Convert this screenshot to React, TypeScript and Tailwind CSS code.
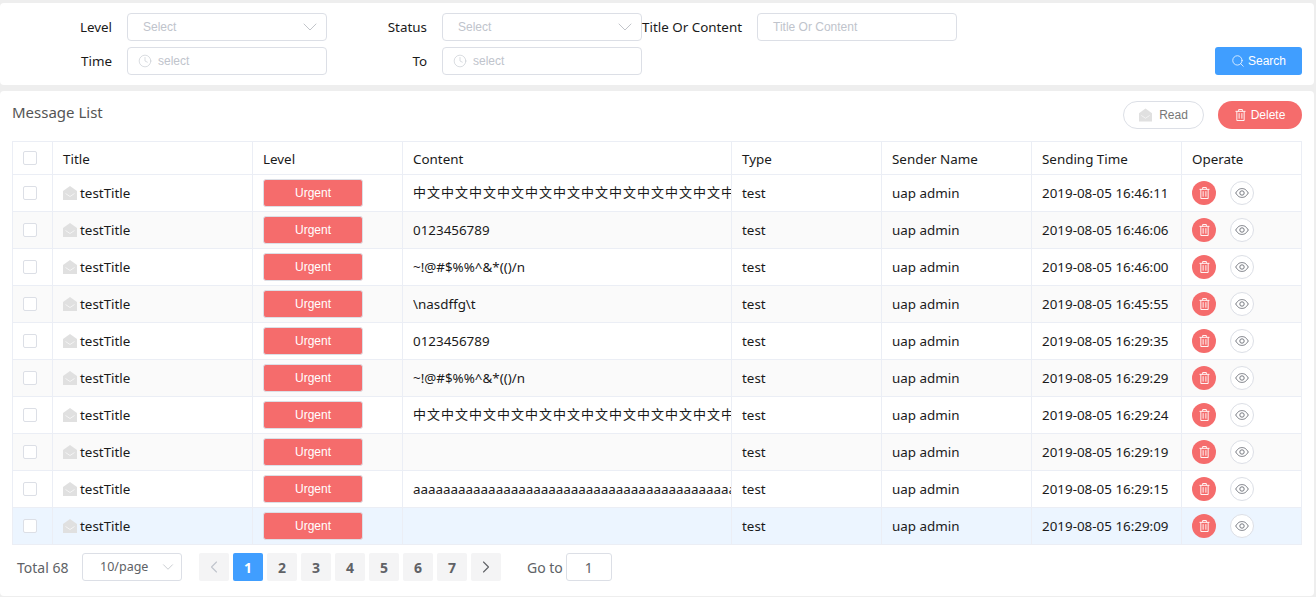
import React from 'react';
import { ChevronDown, ChevronLeft, ChevronRight, Clock, Search } from 'lucide-react';

const sans = 'font-["Noto_Sans","Noto_Sans_CJK_SC",sans-serif]';
const arial = 'font-["Liberation_Sans",Arial,sans-serif]';

const rows = [
    { content: '中文中文中文中文中文中文中文中文中文中文中文中文中文中文', time: '2019-08-05 16:46:11' },
    { content: '0123456789', time: '2019-08-05 16:46:06' },
    { content: '~!@#$%%^&*(()/n', time: '2019-08-05 16:46:00' },
    { content: '\\nasdffg\\t', time: '2019-08-05 16:45:55' },
    { content: '0123456789', time: '2019-08-05 16:29:35' },
    { content: '~!@#$%%^&*(()/n', time: '2019-08-05 16:29:29' },
    { content: '中文中文中文中文中文中文中文中文中文中文中文中文中文中文', time: '2019-08-05 16:29:24' },
    { content: '', time: '2019-08-05 16:29:19' },
    { content: 'aaaaaaaaaaaaaaaaaaaaaaaaaaaaaaaaaaaaaaaaaaaaaaaaaaaaaaaaaaaa', time: '2019-08-05 16:29:15' },
    { content: '', time: '2019-08-05 16:29:09' },
];

const MailOpen = ({ className }: { className?: string }) => (
    <svg viewBox="0 0 14 14" className={className} fill="none">
        <path d="M0 5 L7 0 L14 5 V14 H0 Z" fill="#e0e0e0" />
        <path d="M2.5 7.5 L7 10.5 L11.5 7.5" stroke="#f4f4f4" strokeWidth="1" />
    </svg>
);

const TrashIcon = ({ className }: { className?: string }) => (
    <svg viewBox="0 0 12 13" className={className} fill="none" stroke="currentColor" strokeWidth="1">
        <path d="M0.5 2.5 H11.5 M4 2.5 V0.5 H8 V2.5 M2 2.5 V12.5 H10 V2.5 M4.5 4.5 V10.5 M7.5 4.5 V10.5" />
    </svg>
);

const EyeIcon = () => (
    <svg viewBox="0 0 14 10" className="h-[10px] w-[14px]" fill="none" stroke="#767980" strokeWidth="1">
        <path d="M0.7 5 C3 1.2 5 0.6 7 0.6 C9 0.6 11 1.2 13.3 5 C11 8.8 9 9.4 7 9.4 C5 9.4 3 8.8 0.7 5 Z" />
        <circle cx="7" cy="5" r="2.2" />
    </svg>
);

const Label = ({ children }: { children: React.ReactNode }) => (
    <label className="w-[115px] shrink-0 pr-[15px] text-right text-[13.4px] whitespace-nowrap text-[#1a1a1a]">{children}</label>
);

const SelectBox = () => (
    <div className={`flex h-[28px] w-[200px] items-center justify-between rounded border border-[#dcdfe6] bg-white pr-[4px] pl-[15px] text-[12px] text-[#c0c4cc] ${arial}`}>
        <span>Select</span>
        <ChevronDown size={24} strokeWidth={0.7} color="#a8acb3" />
    </div>
);

const TimeBox = () => (
    <div className={`flex h-[28px] w-[200px] items-center gap-[6px] rounded border border-[#dcdfe6] bg-white pl-[10px] text-[12px] text-[#c0c4cc] ${arial}`}>
        <Clock size={14} strokeWidth={1} />
        <span>select</span>
    </div>
);

const App: React.FC = () => {
    return (
        <div className={`h-[597px] w-[1316px] overflow-hidden bg-[#eeeeee] pt-[3px] pr-[2px] ${sans}`}>
            <div className="h-[82px] rounded-[4px] bg-white px-[12px] pt-[10px]">
                <div className="flex items-center">
                    <Label>Level</Label>
                    <SelectBox />
                    <Label>Status</Label>
                    <SelectBox />
                    <Label>Title Or Content</Label>
                    <div className={`flex h-[28px] w-[200px] items-center rounded border border-[#dcdfe6] pl-[15px] text-[12px] text-[#c0c4cc] ${arial}`}>Title Or Content</div>
                </div>
                <div className="mt-[6px] flex items-center">
                    <Label>Time</Label>
                    <TimeBox />
                    <Label>To</Label>
                    <TimeBox />
                    <button className={`ml-auto flex h-[28px] w-[87px] items-center justify-center gap-[3px] rounded-[3px] bg-[#409eff] text-[12px] text-white ${arial}`}>
                        <Search size={14} strokeWidth={1.3} />
                        Search
                    </button>
                </div>
            </div>

            <div className="mt-[6px] h-[505px] rounded-[4px] bg-white px-[12px]">
                <div className="flex h-[50px] items-start justify-between pt-[10px]">
                    <h2 className="-mt-[1px] text-[15px] leading-[24px] text-[#555]">Message List</h2>
                    <div className="flex gap-[14px]">
                        <button className={`flex h-[28px] w-[81px] items-center justify-center gap-[7px] rounded-full border border-[#dcdfe6] text-[12px] text-[#777] ${arial}`}>
                            <MailOpen className="h-[14px] w-[13px]" />
                            Read
                        </button>
                        <button className={`flex h-[28px] w-[84px] items-center justify-center gap-[5px] rounded-full bg-[#f56c6c] text-[12px] text-white ${arial}`}>
                            <TrashIcon className="h-[12px] w-[11px]" />
                            Delete
                        </button>
                    </div>
                </div>

                <table className="w-[1289px] table-fixed border-collapse text-[13.4px] text-[#1a1a1a]">
                    <colgroup>
                        <col className="w-[40px]" />
                        <col className="w-[200px]" />
                        <col className="w-[150px]" />
                        <col className="w-[329px]" />
                        <col className="w-[150px]" />
                        <col className="w-[150px]" />
                        <col className="w-[150px]" />
                        <col className="w-[120px]" />
                    </colgroup>
                    <thead>
                        <tr className="h-[33px]">
                            <th className="border border-[#ebeef5] px-[10px]">
                                <span className="block h-[14px] w-[14px] rounded-[2px] border border-[#dcdfe6] bg-white" />
                            </th>
                            {['Title', 'Level', 'Content', 'Type', 'Sender Name', 'Sending Time', 'Operate'].map((h) => (
                                <th key={h} className="border border-[#ebeef5] px-[10px] pt-[2px] text-left font-normal">{h}</th>
                            ))}
                        </tr>
                    </thead>
                    <tbody>
                        {rows.map((row, i) => (
                            <tr key={i} className={`h-[37px] ${i === 9 ? 'bg-[#ecf5ff]' : i % 2 === 1 ? 'bg-[#fafafa]' : 'bg-white'}`}>
                                <td className="border border-[#ebeef5] px-[10px]">
                                    <span className="block h-[14px] w-[14px] rounded-[2px] border border-[#dcdfe6] bg-white" />
                                </td>
                                <td className="border border-[#ebeef5] px-[10px]">
                                    <div className="flex items-center gap-[3px]">
                                        <MailOpen className="h-[14px] w-[14px]" />
                                        testTitle
                                    </div>
                                </td>
                                <td className="border border-[#ebeef5] px-[10px]">
                                    <div className={`flex h-[28px] w-[100px] items-center justify-center rounded-[3px] border border-[#dcdfe6] bg-[#f56c6c] text-[12px] text-white ${arial}`}>Urgent</div>
                                </td>
                                <td className="border border-[#ebeef5] pl-[10px]">
                                    <div className={`overflow-hidden whitespace-nowrap ${row.content.startsWith('中') ? 'text-[13px] tracking-[1px]' : ''}`}>{row.content}</div>
                                </td>
                                <td className="border border-[#ebeef5] px-[10px]">test</td>
                                <td className="border border-[#ebeef5] px-[10px]">uap admin</td>
                                <td className="border border-[#ebeef5] px-[10px] whitespace-nowrap">{row.time}</td>
                                <td className="border border-[#ebeef5] px-[10px]">
                                    <div className="flex items-center gap-[14px]">
                                        <span className="flex h-[24px] w-[24px] items-center justify-center rounded-full bg-[#f56c6c] text-white">
                                            <TrashIcon className="h-[12px] w-[11px]" />
                                        </span>
                                        <span className="flex h-[24px] w-[24px] items-center justify-center rounded-full border border-[#dcdfe6] bg-white">
                                            <EyeIcon />
                                        </span>
                                    </div>
                                </td>
                            </tr>
                        ))}
                    </tbody>
                </table>

                <div className="mt-[8px] flex h-[28px] items-center pl-[5px] text-[14px] text-[#606266]">
                    <span className="w-[65px]">Total 68</span>
                    <div className="flex h-[28px] w-[100px] items-center justify-between rounded-[3px] border border-[#dcdfe6] pr-[4px] pl-[17px] text-[12.5px]">
                        10/page
                        <ChevronDown size={18} strokeWidth={0.9} color="#b0b4bb" />
                    </div>
                    <div className="ml-[17px] flex gap-[4px]">
                        <span className="flex h-[28px] w-[30px] items-center justify-center rounded-[2px] bg-[#f4f4f5] text-[#c0c4cc]">
                            <ChevronLeft size={20} strokeWidth={1.3} />
                        </span>
                        {[1, 2, 3, 4, 5, 6, 7].map((n) => (
                            <span key={n} className={`flex h-[28px] w-[30px] items-center justify-center rounded-[2px] font-bold ${n === 1 ? 'bg-[#409eff] text-white' : 'bg-[#f4f4f5] text-[#606266]'}`}>{n}</span>
                        ))}
                        <span className="flex h-[28px] w-[30px] items-center justify-center rounded-[2px] bg-[#f4f4f5] text-[#606266]">
                            <ChevronRight size={20} strokeWidth={1.3} />
                        </span>
                    </div>
                    <span className="ml-[26px]">Go to</span>
                    <div className="ml-[3px] flex h-[28px] w-[46px] items-center justify-center rounded-[3px] border border-[#dcdfe6]">1</div>
                </div>
            </div>
        </div>
    );
};

export default App;
